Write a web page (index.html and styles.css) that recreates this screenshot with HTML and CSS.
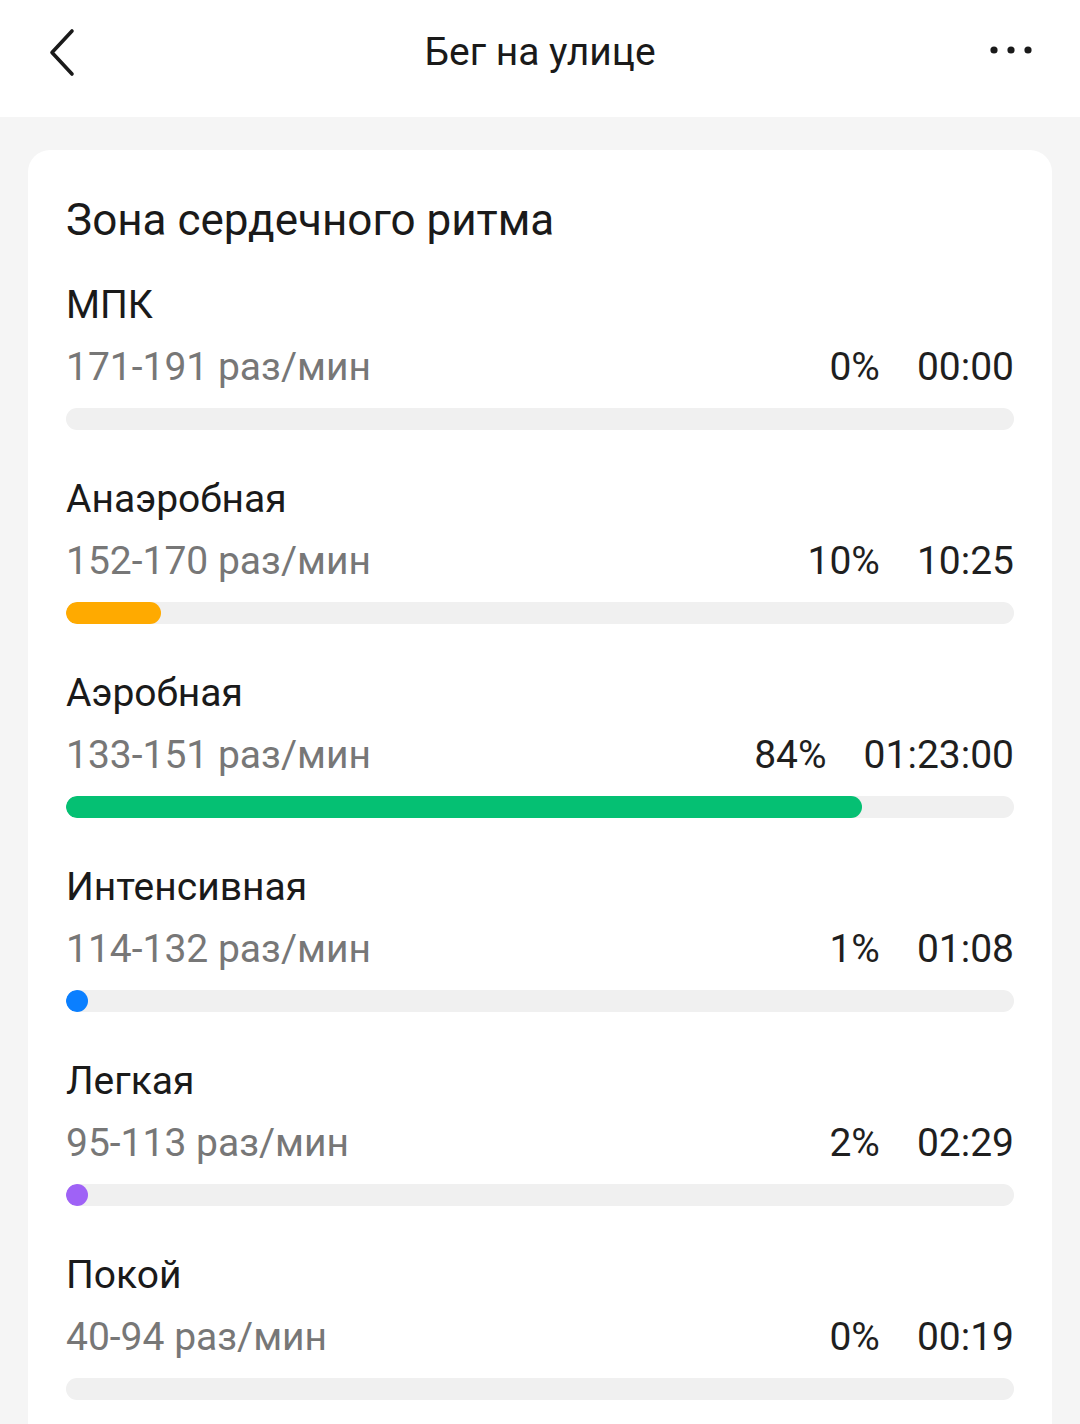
FILE: index.html
```html
<!DOCTYPE html>
<html lang="ru">
<head>
<meta charset="utf-8">
<link rel="stylesheet" href="styles.css">
</head>
<body>
<header class="topbar">
  <svg class="back" width="30" height="50" viewBox="0 0 30 50"><path d="M25 3 L5 24.5 L25 46" fill="none" stroke="#1a1a1a" stroke-width="3.6" stroke-linecap="round" stroke-linejoin="round"/></svg>
  <h1 class="title">Бег на улице</h1>
  <svg class="more" width="42" height="10" viewBox="0 0 42 10"><circle cx="4" cy="5" r="3.6" fill="#1a1a1a"/><circle cx="21" cy="5" r="3.6" fill="#1a1a1a"/><circle cx="38" cy="5" r="3.6" fill="#1a1a1a"/></svg>
</header>
<main class="content">
  <section class="card">
    <h2 class="card-title">Зона сердечного ритма</h2>
    <div class="zone">
      <div class="zone-name">МПК</div>
      <div class="zone-row"><span class="range">171-191 раз/мин</span><span class="vals"><span>0%</span><span>00:00</span></span></div>
      <div class="track"></div>
    </div>
    <div class="zone">
      <div class="zone-name">Анаэробная</div>
      <div class="zone-row"><span class="range">152-170 раз/мин</span><span class="vals"><span>10%</span><span>10:25</span></span></div>
      <div class="track"><div class="fill orange" style="width:10%"></div></div>
    </div>
    <div class="zone">
      <div class="zone-name">Аэробная</div>
      <div class="zone-row"><span class="range">133-151 раз/мин</span><span class="vals"><span>84%</span><span>01:23:00</span></span></div>
      <div class="track"><div class="fill green" style="width:84%"></div></div>
    </div>
    <div class="zone">
      <div class="zone-name">Интенсивная</div>
      <div class="zone-row"><span class="range">114-132 раз/мин</span><span class="vals"><span>1%</span><span>01:08</span></span></div>
      <div class="track"><div class="fill blue" style="width:1%"></div></div>
    </div>
    <div class="zone">
      <div class="zone-name">Легкая</div>
      <div class="zone-row"><span class="range">95-113 раз/мин</span><span class="vals"><span>2%</span><span>02:29</span></span></div>
      <div class="track"><div class="fill purple" style="width:2%"></div></div>
    </div>
    <div class="zone">
      <div class="zone-name">Покой</div>
      <div class="zone-row"><span class="range">40-94 раз/мин</span><span class="vals"><span>0%</span><span>00:19</span></span></div>
      <div class="track"></div>
    </div>
  </section>
</main>
</body>
</html>
```
FILE: styles.css
```css
* { box-sizing: border-box; }
html, body { margin: 0; padding: 0; }
body {
  background: #f5f5f5;
  font-family: Roboto, "Noto Sans", sans-serif;
  color: #1a1a1a;
  width: 1080px;
  height: 1424px;
  overflow: hidden;
}
.topbar {
  height: 117px;
  background: #fff;
  display: flex;
  align-items: center;
  justify-content: space-between;
  padding: 0 48px 14px 47px;
  position: relative;
}
.title {
  margin: 0;
  font-size: 39px;
  font-weight: 400;
  color: #1a1a1a;
  position: absolute;
  left: 0;
  right: 0;
  top: 29px;
  text-align: center;
  line-height: 46px;
  pointer-events: none;
}
.back { display: block; margin-top: 2px; }
.more { display: block; margin-top: -4px; }
.content { padding: 33px 28px 0; }
.card {
  background: #fff;
  border-radius: 22px 22px 0 0;
  padding: 40px 38px 24px;
  height: 1274px;
}
.card-title {
  margin: 0 0 30px;
  font-size: 44px;
  font-weight: 400;
  line-height: 60px;
  color: #1a1a1a;
}
.zone { margin-bottom: 44px; }
.zone:last-child { margin-bottom: 0; }
.zone-name {
  font-size: 39px;
  line-height: 50px;
  color: #1a1a1a;
}
.zone-row {
  margin-top: 7px;
  height: 60px;
  line-height: 60px;
  display: flex;
  justify-content: space-between;
  font-size: 39px;
}
.range { color: #777; }
.vals { display: flex; gap: 37px; color: #1f1f1f; }
.track {
  margin-top: 11px;
  height: 22px;
  border-radius: 11px;
  background: #f0f0f0;
  overflow: hidden;
}
.fill {
  height: 22px;
  min-width: 22px;
  border-radius: 11px;
}
.orange { background: #ffaa00; }
.green { background: #05c073; }
.blue { background: #0a7fff; }
.purple { background: #9f62f6; }
```
